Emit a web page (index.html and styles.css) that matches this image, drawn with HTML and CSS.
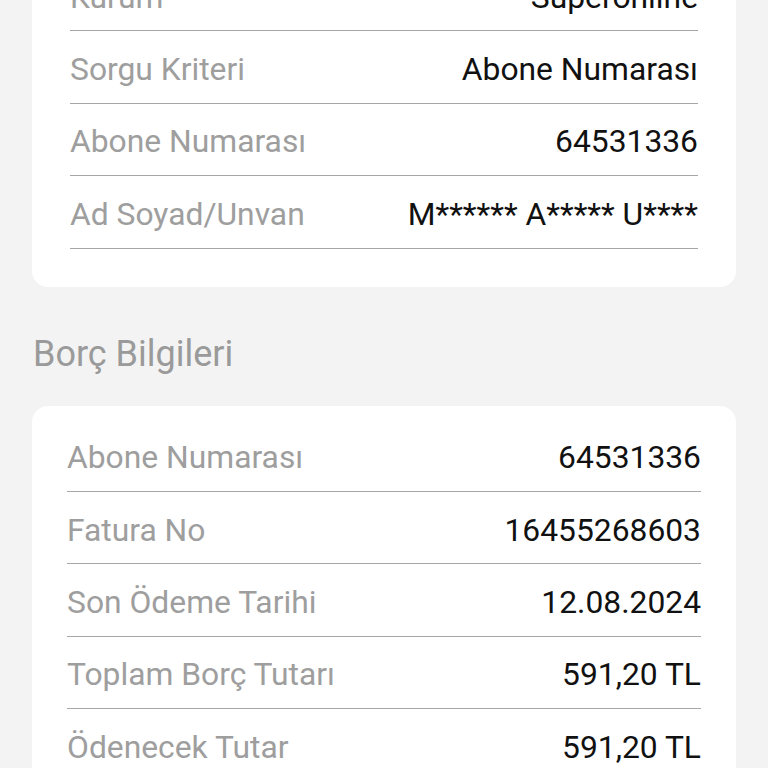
FILE: index.html
```html
<!DOCTYPE html>
<html lang="tr">
<head>
    <meta charset="UTF-8">
    <meta name="viewport" content="width=device-width, initial-scale=1.0">
    <title>Fatura Sorgulama</title>
    <link rel="stylesheet" href="styles.css">
</head>
<body>
    <div class="page">
        <div class="card card-query">
            <div class="row">
                <span class="label">Kurum</span>
                <span class="value">Superonline</span>
            </div>
            <div class="row">
                <span class="label">Sorgu Kriteri</span>
                <span class="value">Abone Numarası</span>
            </div>
            <div class="row">
                <span class="label">Abone Numarası</span>
                <span class="value">64531336</span>
            </div>
            <div class="row">
                <span class="label">Ad Soyad/Unvan</span>
                <span class="value">M****** A***** U****</span>
            </div>
        </div>

        <h2 class="section-title">Borç Bilgileri</h2>

        <div class="card card-debt">
            <div class="row">
                <span class="label">Abone Numarası</span>
                <span class="value">64531336</span>
            </div>
            <div class="row">
                <span class="label">Fatura No</span>
                <span class="value">16455268603</span>
            </div>
            <div class="row">
                <span class="label">Son Ödeme Tarihi</span>
                <span class="value">12.08.2024</span>
            </div>
            <div class="row">
                <span class="label">Toplam Borç Tutarı</span>
                <span class="value">591,20 TL</span>
            </div>
            <div class="row">
                <span class="label">Ödenecek Tutar</span>
                <span class="value">591,20 TL</span>
            </div>
        </div>
    </div>
</body>
</html>
```

FILE: styles.css
```css
body {
    margin: 0;
    background: #f3f3f3;
    font-family: Roboto, "Noto Sans", sans-serif;
    overflow: hidden;
}

.page {
    padding: 0 32px;
    margin-top: -55px;
}

.card {
    background: white;
    border-radius: 16px;
    padding: 14px 38px 38px;
}

.card-debt {
    padding: 14px 35px 38px;
}

.row {
    box-sizing: border-box;
    height: 72.4px;
    padding-top: 4px;
    display: flex;
    justify-content: space-between;
    align-items: center;
    border-bottom: 1px solid #a6a6a6;
    font-size: 31.8px;
}

.label {
    color: #9e9e9e;
}

.value {
    color: #111;
}

.section-title {
    margin: 46px 0 31px 1px;
    font-size: 36px;
    font-weight: 400;
    color: #9a9a9a;
}
```
